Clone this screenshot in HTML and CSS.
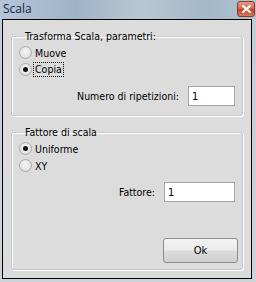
FILE: index.html
```html
<!DOCTYPE html>
<html lang="it">
<head>
    <meta charset="UTF-8">
    <title>Scala</title>
    <link rel="stylesheet" href="styles.css">
</head>
<body>
    <div class="finestra">
        <div class="titolo">
            <span class="titolo-testo">Scala</span>
            <span class="chiudi">
                <svg width="9" height="8" viewBox="0 0 9 8">
                    <path d="M1 1 L8 7 M8 1 L1 7" stroke="#fff" stroke-width="2.2" stroke-linecap="square"/>
                </svg>
            </span>
        </div>

        <div class="client">
            <fieldset class="gruppo gruppo-uno">
                <legend>Trasforma Scala, parametri:</legend>
                <label class="radio"><span class="cerchio"></span><span>Muove</span></label>
                <label class="radio"><span class="cerchio attivo"></span><span class="focus">Copia</span></label>
                <div class="riga-campo">
                    <span class="etichetta">Numero di ripetizioni:</span>
                    <input class="campo campo-corto" type="text" value="1">
                </div>
            </fieldset>

            <fieldset class="gruppo gruppo-due">
                <legend>Fattore di scala</legend>
                <label class="radio"><span class="cerchio attivo"></span><span>Uniforme</span></label>
                <label class="radio"><span class="cerchio"></span><span>XY</span></label>
                <div class="riga-campo">
                    <span class="etichetta">Fattore:</span>
                    <input class="campo campo-lungo" type="text" value="1">
                </div>
                <div class="riga-bottone">
                    <button class="bottone">Ok</button>
                </div>
            </fieldset>
        </div>
    </div>
</body>
</html>
```

FILE: styles.css
```css
body {
    margin: 0;
    padding: 0;
    font-family: 'DejaVu Sans Condensed', 'DejaVu Sans', sans-serif;
    font-size: 10.5px;
    color: #000;
}

.finestra {
    width: 256px;
    height: 282px;
    background: linear-gradient(180deg, #aebfd0 0px, #c3cdd6 19px, #cdd3d9 100%);
    display: flex;
    flex-direction: column;
}

.titolo {
    height: 19px;
    display: flex;
    align-items: flex-start;
    justify-content: space-between;
    background: linear-gradient(90deg, #b4c6d8 0%, #9fb3c8 30%, #b9c7d4 55%, #a3b8ca 80%, #b1c2d1 100%);
}

.titolo-testo {
    font-family: 'Open Sans', 'Noto Sans', sans-serif;
    font-size: 12px;
    line-height: 16px;
    margin-left: 3px;
    margin-top: 1px;
    color: #15263a;
}

.chiudi {
    width: 16px;
    height: 14px;
    margin-top: 1px;
    margin-right: 1px;
    border: 1px solid #8a3b2c;
    border-radius: 3px;
    background: linear-gradient(180deg, #e49a86 0%, #d66a52 45%, #c2442b 55%, #d77b5f 100%);
    display: flex;
    align-items: center;
    justify-content: center;
}

.client {
    margin: 0 4px 3px 2px;
    height: 260px;
    box-sizing: border-box;
    border: 1px solid #000;
    background-color: #dcdcdc;
    padding: 10px 8px 0 8px;
}

.gruppo {
    margin: 0;
    padding: 1px 7px 0 7px;
    border: 1px solid #c4c8cc;
    border-radius: 3px;
    box-shadow: inset 1px 1px 0 #fff, 1px 1px 0 #fff;
}

.gruppo legend {
    padding: 0 1px;
    margin-left: 5px;
    line-height: 13px;
}

.gruppo-uno {
    padding-bottom: 9px;
}

.gruppo-due {
    margin-top: 10px;
    padding-bottom: 6px;
}

.radio {
    display: flex;
    align-items: center;
    height: 17px;
}

.cerchio {
    width: 11px;
    height: 11px;
    border: 1px solid #a9a9a9;
    border-radius: 50%;
    background: radial-gradient(circle at 50% 40%, #f4f4f4 0%, #e2e2e2 70%, #d6d6d6 100%);
    margin-right: 3px;
    display: flex;
    align-items: center;
    justify-content: center;
    flex-shrink: 0;
}

.cerchio.attivo::after {
    content: '';
    width: 5px;
    height: 5px;
    border-radius: 50%;
    background: #111;
}

.focus {
    outline: 1px dotted #000;
    padding: 0 1px;
    margin-left: -1px;
    line-height: 13px;
}

.riga-campo {
    display: flex;
    justify-content: flex-end;
    align-items: center;
    margin-top: 8px;
    height: 20px;
}

.etichetta {
    margin-right: 9px;
}

.campo {
    box-sizing: border-box;
    height: 20px;
    border: 1px solid #a5a5a5;
    background: #fff;
    font-family: inherit;
    font-size: 11px;
    padding: 0 3px;
    margin: 0;
    color: #000;
}

.campo-corto {
    width: 47px;
}

.campo-lungo {
    width: 71px;
}

.riga-bottone {
    display: flex;
    justify-content: flex-end;
    margin-top: 36px;
    margin-right: -3px;
}

.bottone {
    width: 75px;
    height: 25px;
    border: 1px solid #8d8d8d;
    border-radius: 3px;
    background: linear-gradient(180deg, #f2f2f2 0%, #ebebeb 48%, #dddddd 52%, #cfcfcf 100%);
    font-family: inherit;
    font-size: 11px;
    color: #000;
    padding: 0;
}
```
